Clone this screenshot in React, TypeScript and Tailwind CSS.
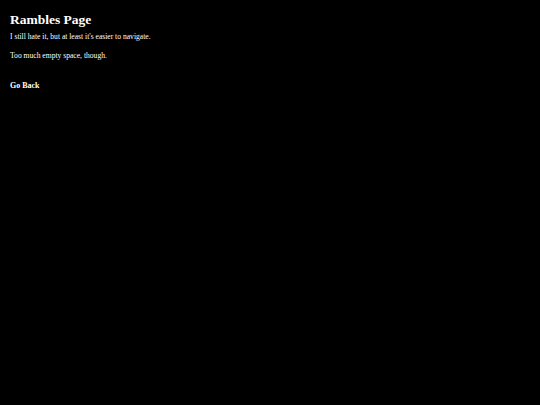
export default function App() {
  return (
    <div className="min-h-screen bg-black px-[10px] pt-[12px] text-white font-['Liberation_Serif',serif]">
      <h1 className="text-[13.5px] font-bold leading-[16px]">Rambles Page</h1>
      <p className="mt-[4px] text-[7.6px] leading-[9px]">I still hate it, but at least it&apos;s easier to navigate.</p>
      <p className="mt-[10px] text-[7.6px] leading-[9px]">Too much empty space, though.</p>
      <a href="#" className="mt-[21px] block text-[8px] font-bold leading-[10px]">Go Back</a>
    </div>
  )
}
